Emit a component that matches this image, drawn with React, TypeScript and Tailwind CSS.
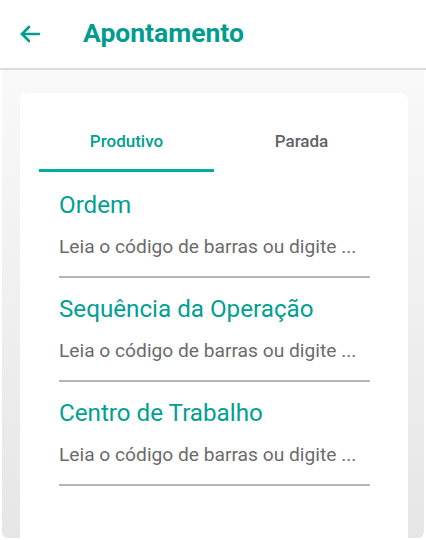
import React from "react";

function Field({ label }: { label: string }) {
  return (
    <div className="flex flex-col">
      <div className="h-[40px] flex items-center text-[24.2px] leading-none text-[#00a091]">{label}</div>
      <div className="h-[44px] flex items-center text-[19.2px] leading-none text-[#6b6b6b]">
        Leia o código de barras ou digite ...
      </div>
      <div className="h-[2px] bg-[#b5b5b5] mt-[7px] mr-[19px]" />
    </div>
  );
}

export default function App() {
  return (
    <div className="w-[426px] h-[540px] bg-white overflow-hidden" style={{ fontFamily: "Roboto, 'Noto Sans', sans-serif" }}>
      <div className="h-[70px] flex items-center border-b-2 border-[#dcdcdc]">
        <div className="w-[83px] flex items-center pl-[18px] pb-[1px]">
          <svg width="24" height="24" viewBox="0 0 24 24" fill="none" stroke="#009d8f" strokeWidth="2.6" strokeLinecap="round" strokeLinejoin="round">
            <path d="M21 12H4" />
            <path d="M11 5l-7 7 7 7" />
          </svg>
        </div>
        <div className="text-[26.5px] font-bold text-[#009d8f] leading-none pb-[1px]">Apontamento</div>
      </div>
      <div className="mx-[2px] h-[468px] rounded-b-[6px] bg-gradient-to-b from-[#f9f9f9] to-[#e6e6e6] pl-[18px] pr-[16px] pt-[23px]">
        <div className="h-full bg-white rounded-t-[8px] px-[19px] pt-[26px]">
          <div className="flex h-[53px]">
            <div className="w-[175px] flex flex-col items-center">
              <div className="h-[50px] flex items-center pb-[4px] text-[17px] font-medium text-[#00a091]">Produtivo</div>
              <div className="h-[3px] w-full bg-[#00ae9f]" />
            </div>
            <div className="w-[175px] flex flex-col items-center">
              <div className="h-[50px] flex items-center pb-[4px] text-[17px] font-medium text-[#5f6368]">Parada</div>
            </div>
          </div>
          <div className="pl-[20px] pt-[13px] flex flex-col gap-[11px]">
            <Field label="Ordem" />
            <Field label="Sequência da Operação" />
            <Field label="Centro de Trabalho" />
          </div>
        </div>
      </div>
    </div>
  );
}
